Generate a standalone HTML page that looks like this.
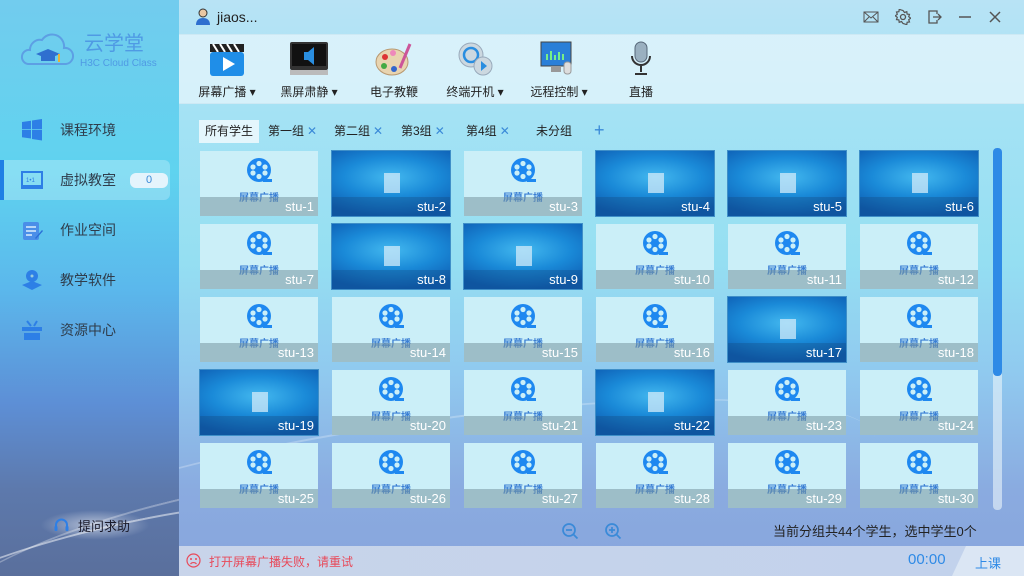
<!DOCTYPE html>
<html><head><meta charset="utf-8"><style>
*{margin:0;padding:0;box-sizing:border-box}
html,body{width:1024px;height:576px;overflow:hidden}
body{position:relative;font-family:"Liberation Sans","Noto Sans CJK SC",sans-serif;font-size:12px;color:#333;white-space:nowrap}
#side{position:absolute;left:0;top:0;width:179px;height:576px;background:linear-gradient(180deg,#72ccee 0%,#5fd3ef 30%,#5bb8ec 50%,#5d8fd6 70%,#5d79ac 85%,#5a6f9c 100%);overflow:hidden}
#main{position:absolute;left:179px;top:0;width:845px;height:576px;background:linear-gradient(180deg,#b8e3f5 0%,#a4e2f4 20%,#95dff2 45%,#90c9ef 65%,#8aabe0 85%,#88a5dc 100%);overflow:hidden}
.swoosh{position:absolute;border-radius:50%;border-top:2px solid rgba(255,255,255,.5)}
.logo{position:absolute;left:20px;top:30px}
.nav{position:absolute;left:0;width:179px;height:40px;display:flex;align-items:center;font-size:14px;color:#2f3d4c}
.nav .ic{width:22px;height:22px;margin-left:21px;margin-right:17px;flex:none}
.nav.act{left:0;width:170px;background:rgba(255,255,255,.25);border-radius:0 6px 6px 0;border-left:4px solid #1f7fe5}
.badge{margin-left:14px;width:38px;height:15px;background:#e4f4fc;border-radius:6px;text-align:center;font-size:11px;line-height:15px;color:#3a8ad8;flex:none}
#tb{position:absolute;left:0;top:34px;width:845px;height:70px;background:rgba(230,246,252,.75);border-top:1px solid #cde9f4;border-bottom:1px solid #cde9f4}
.tool{position:absolute;top:5px;text-align:center;font-size:12px;color:#222}
.tool .i{display:block;width:40px;height:38px;margin:0 auto 5px}
.tab{position:absolute;top:120px;height:23px;line-height:23px;font-size:12px;color:#222}
.tab b{color:#3a8ad8;font-weight:normal;margin-left:3px}
.tile{position:absolute;width:118px;height:65px;overflow:hidden}
.ph{background:#cbeff8}
.ds{background:radial-gradient(ellipse 80% 60% at 50% 40%,#43b8ef 0%,#1a8ad8 50%,#0d5cb2 100%);outline:1px solid #3f8fc8}
.lb{position:absolute;left:0;bottom:0;width:100%;height:19px;background:rgba(120,150,160,.55);color:#fff;text-align:right;padding-right:4px;font-size:13px;line-height:19px}
.ds .lb{background:rgba(20,70,120,.3)}
.reel{position:absolute;left:47px;top:7px}
.pt{position:absolute;left:0;width:118px;top:38px;text-align:center;font-size:10px;color:#3b7fd4;font-weight:bold}
.win{position:absolute;left:52px;top:22px;width:16px;height:20px;background:rgba(210,235,250,.75)}
.ctrl{position:absolute;top:9px;width:16px;height:16px}
</style></head><body>
<div id="side">
 <div class="swoosh" style="left:-120px;top:520px;width:520px;height:120px;transform:rotate(-12deg)"></div>
 <div class="swoosh" style="left:-60px;top:500px;width:480px;height:110px;transform:rotate(-14deg);border-top-color:rgba(255,255,255,.3)"></div>
 <svg class="logo" width="140" height="40" viewBox="0 0 140 40">
  <path d="M8 34 H46 A8 8 0 0 0 44 18 A12 12 0 0 0 22 10 A10 10 0 0 0 10 20 A7 7 0 0 0 8 34Z" fill="none" stroke="#5d9fe4" stroke-width="2"/>
  <path d="M16 24 L28 19 L40 24 L28 29Z" fill="#2f6fcf"/><path d="M21 26 v5 h14 v-5" fill="#2f6fcf"/><rect x="38" y="24" width="2" height="8" fill="#e8b23a"/>
  <text x="64" y="20" font-size="20" fill="#4f9ae4" font-family="Noto Sans CJK SC">云学堂</text>
  <text x="60" y="36" font-size="10" fill="#4f9ae4" font-family="Liberation Sans">H3C Cloud Class</text>
 </svg>
 <div class="nav" style="top:110px"><svg class="ic" viewBox="0 0 22 22"><path d="M1 3l9-1.3v8.5H1zM11 1.5L21 0v10.2H11zM1 11h9v8.5L1 18.3zM11 11h10v10.5L11 20z" fill="#2d7fe6"/></svg>课程环境</div>
 <div class="nav act" style="top:160px"><svg class="ic" viewBox="0 0 22 22" style="margin-left:17px"><rect x="1" y="3" width="20" height="14" fill="none" stroke="#2d7fe6" stroke-width="2"/><rect x="0" y="17" width="22" height="3" fill="#2d7fe6"/><text x="5" y="13" font-size="6" fill="#2d7fe6">1•1</text></svg>虚拟教室<span class="badge">0</span></div>
 <div class="nav" style="top:210px"><svg class="ic" viewBox="0 0 22 22"><rect x="2" y="3" width="16" height="18" rx="2" fill="#4a8ee8"/><path d="M5 8h10M5 12h10M5 16h6" stroke="#dbeefc" stroke-width="1.5"/><path d="M14 19l7-8 1 1-7 8z" fill="#2a6fd8"/></svg>作业空间</div>
 <div class="nav" style="top:260px"><svg class="ic" viewBox="0 0 22 22"><circle cx="11" cy="7" r="6" fill="#2d7fe6"/><circle cx="11" cy="7" r="1.5" fill="#9cd"/><path d="M1 16l10-4 10 4-10 5z" fill="#2d7fe6"/></svg>教学软件</div>
 <div class="nav" style="top:310px"><svg class="ic" viewBox="0 0 22 22"><path d="M6 2l4 5M16 2l-3 5" stroke="#2d7fe6" stroke-width="2"/><rect x="1" y="8" width="20" height="4" fill="#2d7fe6"/><rect x="3" y="14" width="16" height="7" fill="#2d7fe6"/></svg>资源中心</div>
 <div style="position:absolute;left:40px;top:510px;width:110px;height:30px;border-radius:50%;background:radial-gradient(ellipse,rgba(255,255,255,.55),rgba(255,255,255,0) 70%)"></div>
 <div style="position:absolute;left:53px;top:516px;font-size:13px;color:#1a1a2a;display:flex;align-items:center"><svg width="17" height="17" viewBox="0 0 17 17" style="margin-right:8px"><path d="M3 10V8a5.5 5.5 0 0 1 11 0v2" fill="none" stroke="#2d7fe6" stroke-width="2"/><rect x="1.5" y="9" width="3" height="5" rx="1" fill="#2d7fe6"/><rect x="12.5" y="9" width="3" height="5" rx="1" fill="#2d7fe6"/></svg>提问求助</div>
</div>
<div id="main">
 <div class="swoosh" style="left:-200px;top:420px;width:900px;height:160px;transform:rotate(-8deg);border-top-color:rgba(255,255,255,.25)"></div>
 <div style="position:absolute;left:16px;top:8px;display:flex;align-items:center;font-size:14px;color:#222"><svg width="16" height="17" viewBox="0 0 16 17" style="margin-right:6px"><circle cx="8" cy="5" r="4" fill="#e9c7a3" stroke="#333" stroke-width="1"/><path d="M1 17c0-5 3-7 7-7s7 2 7 7z" fill="#2e6fcf"/></svg>jiaos...</div>
 <svg class="ctrl" style="left:684px" viewBox="0 0 16 16"><rect x="1" y="3" width="14" height="10" fill="none" stroke="#555"/><path d="M1 3l7 6 7-6M1 13l5-5M15 13l-5-5" fill="none" stroke="#555"/></svg>
 <svg class="ctrl" style="left:716px" viewBox="0 0 16 16"><circle cx="8" cy="8" r="2.5" fill="none" stroke="#555" stroke-width="1.3"/><path d="M8 1.5l1.5 2 2.3-.8.3 2.4 2.4.3-.8 2.3 2 1.5-2 1.5.8 2.3-2.4.3-.3 2.4-2.3-.8L8 14.5l-1.5-2-2.3.8-.3-2.4-2.4-.3.8-2.3-2-1.5 2-1.5-.8-2.3 2.4-.3.3-2.4 2.3.8z" fill="none" stroke="#555" stroke-width="1.2"/></svg>
 <svg class="ctrl" style="left:747px" viewBox="0 0 16 16"><path d="M11 5V2H3v12h8v-3M7 8h8M12 5l3 3-3 3" fill="none" stroke="#555" stroke-width="1.3"/></svg>
 <svg class="ctrl" style="left:778px" viewBox="0 0 16 16"><path d="M2 8h12" stroke="#555" stroke-width="1.5"/></svg>
 <svg class="ctrl" style="left:808px" viewBox="0 0 16 16"><path d="M3 3l10 10M13 3L3 13" stroke="#555" stroke-width="1.5"/></svg>
 <div id="tb">
  <div class="tool" style="left:16px;width:64px"><svg class="i" viewBox="0 0 40 38"><rect x="3" y="4" width="34" height="8" fill="#222"/><path d="M6 4l5 8M13 4l5 8M20 4l5 8M27 4l5 8" stroke="#fff" stroke-width="2"/><rect x="3" y="12" width="34" height="24" rx="3" fill="#1f8ee8"/><path d="M16 17v14l12-7z" fill="#fff"/></svg>屏幕广播 ▾</div>
  <div class="tool" style="left:98px;width:64px"><svg class="i" viewBox="0 0 40 38"><rect x="1" y="2" width="38" height="28" rx="2" fill="#333"/><rect x="3" y="4" width="34" height="22" fill="#111"/><path d="M15 12h4l6-5v18l-6-5h-4z" fill="#2a8ee0"/><rect x="1" y="30" width="38" height="5" fill="#bbb"/></svg>黑屏肃静 ▾</div>
  <div class="tool" style="left:185px;width:60px"><svg class="i" viewBox="0 0 40 38"><ellipse cx="18" cy="22" rx="16" ry="13" fill="#e8d4b0" stroke="#b89870"/><circle cx="11" cy="17" r="3" fill="#d33"/><circle cx="19" cy="13" r="3" fill="#e8b"/><circle cx="10" cy="26" r="3" fill="#4a4"/><circle cx="20" cy="29" r="3" fill="#36c"/><path d="M26 28L36 4" stroke="#c59" stroke-width="3"/></svg>电子教鞭</div>
  <div class="tool" style="left:264px;width:64px"><svg class="i" viewBox="0 0 40 38"><circle cx="16" cy="15" r="12" fill="#ccd8e0" stroke="#9ab"/><circle cx="16" cy="15" r="7" fill="none" stroke="#2a8ee0" stroke-width="2.5"/><circle cx="28" cy="26" r="9" fill="#ccd8e0" stroke="#9ab"/><path d="M26 21v10l6-5z" fill="#2a8ee0"/></svg>终端开机 ▾</div>
  <div class="tool" style="left:348px;width:64px"><svg class="i" viewBox="0 0 40 38"><rect x="2" y="2" width="30" height="24" fill="#2a7fd8" stroke="#444"/><path d="M8 20v-6M12 20v-9M16 20v-5M20 20v-8M24 20v-6" stroke="#7e8" stroke-width="2"/><rect x="12" y="26" width="10" height="6" fill="#999"/><rect x="25" y="22" width="7" height="12" rx="3" fill="#ddd" stroke="#999"/></svg>远程控制 ▾</div>
  <div class="tool" style="left:440px;width:44px"><svg class="i" viewBox="0 0 40 38"><rect x="14" y="2" width="12" height="20" rx="6" fill="#9ab0c0" stroke="#567"/><path d="M11 16a9 9 0 0 0 18 0M20 25v7M14 34h12" fill="none" stroke="#333" stroke-width="2"/></svg>直播</div>
 </div>
 <div class="tab" style="left:20px;width:60px;background:#e4f6fc;text-align:center">所有学生</div>
 <div class="tab" style="left:89px">第一组<b>✕</b></div>
 <div class="tab" style="left:155px">第二组<b>✕</b></div>
 <div class="tab" style="left:222px">第3组<b>✕</b></div>
 <div class="tab" style="left:287px">第4组<b>✕</b></div>
 <div class="tab" style="left:357px">未分组</div>
 <div class="tab" style="left:415px;color:#3a8ad8;font-size:18px;line-height:20px">+</div>
 <div id="grid"></div>
 <div style="position:absolute;left:814px;top:148px;width:9px;height:362px;background:rgba(235,245,250,.6);border-radius:4px"><div style="width:9px;height:228px;background:#2e8ae6;border-radius:4px"></div></div>
 <svg style="position:absolute;left:382px;top:522px" width="18" height="18" viewBox="0 0 18 18"><circle cx="8" cy="8" r="6" fill="none" stroke="#3a8ad8" stroke-width="1.7"/><path d="M5 8h6M12.5 12.5l4 4" stroke="#3a8ad8" stroke-width="1.7"/></svg>
 <svg style="position:absolute;left:425px;top:522px" width="18" height="18" viewBox="0 0 18 18"><circle cx="8" cy="8" r="6" fill="none" stroke="#3a8ad8" stroke-width="1.7"/><path d="M5 8h6M8 5v6M12.5 12.5l4 4" stroke="#3a8ad8" stroke-width="1.7"/></svg>
 <div style="position:absolute;left:594px;top:521px;font-size:13px;color:#222">当前分组共44个学生，选中学生0个</div>
 <div style="position:absolute;left:0;top:546px;width:845px;height:30px;background:linear-gradient(90deg,#c8d4ea,#c2d2ec)"></div>
 <div style="position:absolute;left:773px;top:546px;width:72px;height:30px;background:#dbe6f4;clip-path:polygon(14px 0,100% 0,100% 100%,0 100%)"></div>
 <svg style="position:absolute;left:7px;top:553px" width="15" height="15" viewBox="0 0 15 15"><circle cx="7.5" cy="7.5" r="6.5" fill="none" stroke="#e84a5a" stroke-width="1.2"/><circle cx="5" cy="6" r="1" fill="#e84a5a"/><circle cx="10" cy="6" r="1" fill="#e84a5a"/><path d="M4.5 11a3.5 3 0 0 1 6 0" fill="none" stroke="#e84a5a" stroke-width="1.2"/></svg>
 <div style="position:absolute;left:30px;top:553px;font-size:12px;color:#e84a5a">打开屏幕广播失败，请重试</div>
 <div style="position:absolute;left:729px;top:551px;font-size:15px;color:#2f8ae6">00:00</div>
 <div style="position:absolute;left:796px;top:553px;font-size:13px;color:#2f8ae6">上课</div>
</div>
<script>
var ds=[2,4,5,6,8,9,17,19,22],h='';
for(var i=0;i<30;i++){var c=i%6,r=Math.floor(i/6),n=i+1,x=21+c*132,y=151+r*73,d=ds.indexOf(n)>=0;
h+='<div class="tile '+(d?'ds':'ph')+'" style="left:'+x+'px;top:'+y+'px">';
if(d)h+='<div class="win"></div>';
else h+='<svg class="reel" width="26" height="26" viewBox="0 0 26 26"><circle cx="12" cy="12" r="12" fill="#1e88f0"/><circle cx="12" cy="5.5" r="2.6" fill="#cbeff8"/><circle cx="12" cy="18.5" r="2.6" fill="#cbeff8"/><circle cx="6" cy="9" r="2.6" fill="#cbeff8"/><circle cx="18" cy="9" r="2.6" fill="#cbeff8"/><circle cx="6" cy="15" r="2.6" fill="#cbeff8"/><circle cx="18" cy="15" r="2.6" fill="#cbeff8"/><rect x="16" y="21" width="9" height="3" fill="#1e88f0"/></svg><div class="pt">屏幕广播</div>';
h+='<div class="lb">stu-'+n+'</div></div>';}
document.getElementById('grid').innerHTML=h;
</script>
</body></html>
